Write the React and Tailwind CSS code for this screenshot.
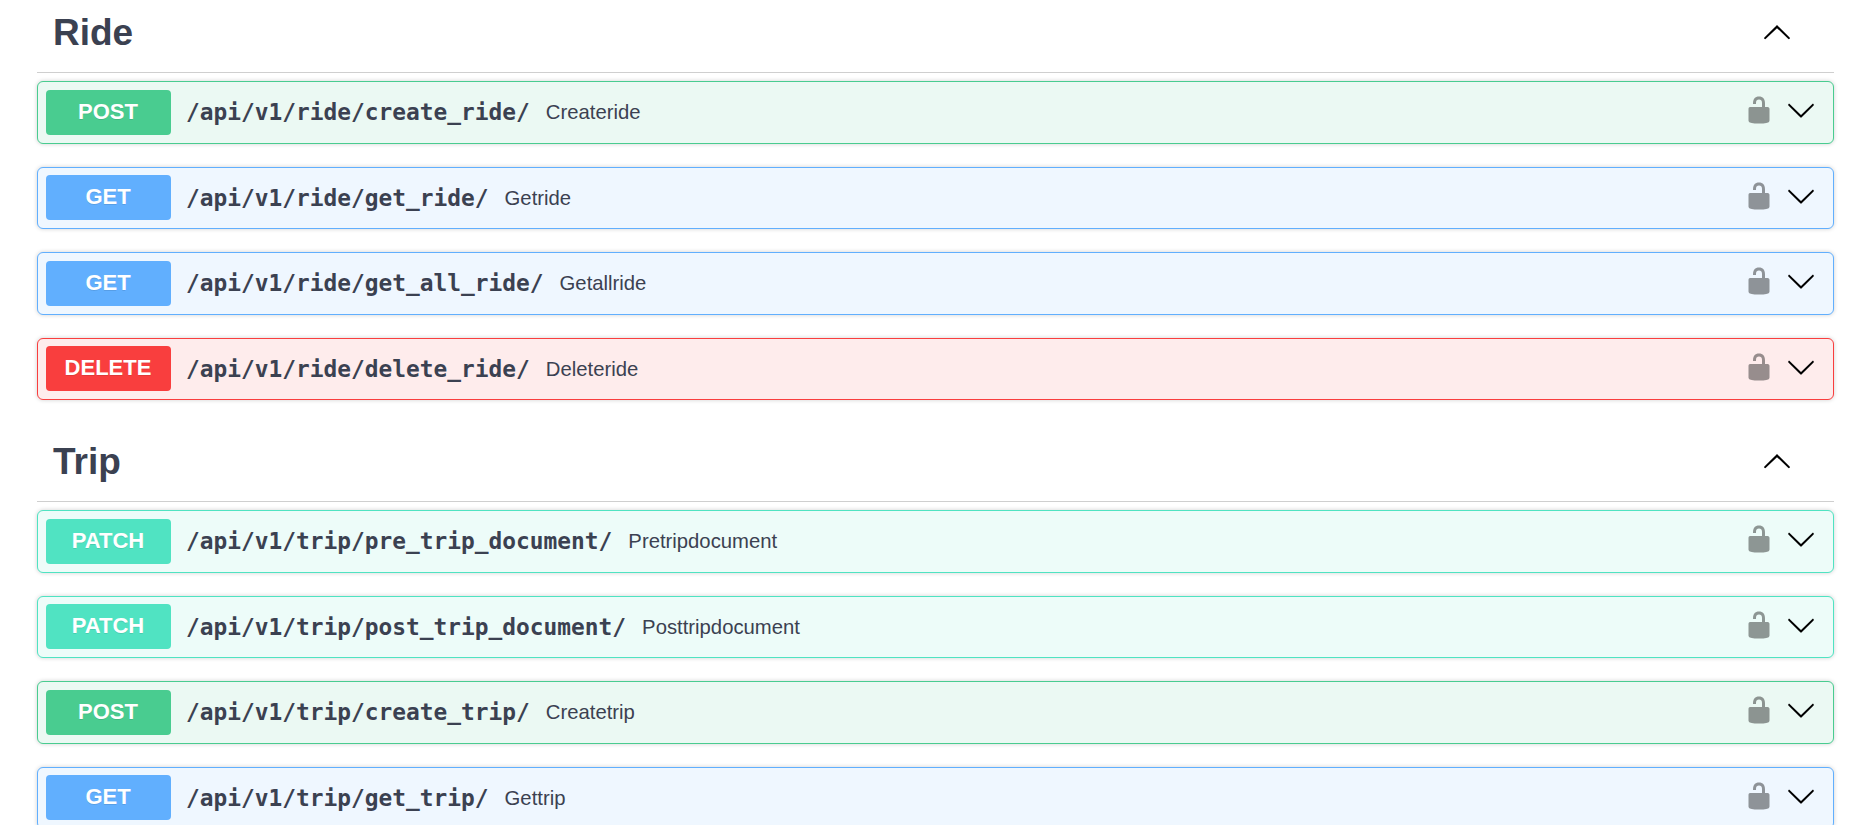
const unlockPath =
  "M15.8 8H14V5.6C14 2.703 12.665 1 10 1 7.334 1 6 2.703 6 5.6V6h2v-.801C8 3.754 8.797 3 10 3c1.203 0 2 .754 2 2.199V8H4c-.553 0-1 .646-1 1.199V17c0 .549.428 1.139.951 1.307l1.197.387C5.672 18.861 6.55 19 7.1 19h5.8c.549 0 1.428-.139 1.951-.307l1.196-.387c.524-.167.953-.757.953-1.306V9.199C17 8.646 16.352 8 15.8 8z"
const arrowPath =
  "M17.418 6.109c.272-.268.709-.268.979 0s.271.701 0 .969l-7.908 7.83c-.27.268-.707.268-.979 0l-7.908-7.83c-.27-.268-.27-.701 0-.969.271-.268.709-.268.979 0L10 13.25l7.418-7.141z"

const METHOD_STYLES = {
  POST: { row: "border-[#49cc90] bg-[#ebf9f3]", badge: "bg-[#49cc90]" },
  GET: { row: "border-[#61affe] bg-[#eff7ff]", badge: "bg-[#61affe]" },
  DELETE: { row: "border-[#f93e3e] bg-[#feecec]", badge: "bg-[#f93e3e]" },
  PATCH: { row: "border-[#50e3c2] bg-[#edfcf9]", badge: "bg-[#50e3c2]" },
}

const sections = [
  {
    title: "Ride",
    rows: [
      { method: "POST", path: "/api/v1/ride/create_ride/", summary: "Createride" },
      { method: "GET", path: "/api/v1/ride/get_ride/", summary: "Getride" },
      { method: "GET", path: "/api/v1/ride/get_all_ride/", summary: "Getallride" },
      { method: "DELETE", path: "/api/v1/ride/delete_ride/", summary: "Deleteride" },
    ],
  },
  {
    title: "Trip",
    rows: [
      { method: "PATCH", path: "/api/v1/trip/pre_trip_document/", summary: "Pretripdocument" },
      { method: "PATCH", path: "/api/v1/trip/post_trip_document/", summary: "Posttripdocument" },
      { method: "POST", path: "/api/v1/trip/create_trip/", summary: "Createtrip" },
      { method: "GET", path: "/api/v1/trip/get_trip/", summary: "Gettrip" },
    ],
  },
]

const Arrow = ({ up }) => (
  <svg viewBox="0 0 20 20" className={`w-[30px] h-[30px] fill-black ${up ? "rotate-180" : ""}`}>
    <path d={arrowPath} />
  </svg>
)

const OperationRow = ({ method, path, summary }) => {
  const styles = METHOD_STYLES[method]
  return (
    <div className={`flex items-center h-[62.5px] mb-[23px] pl-[7.5px] pr-[17px] border rounded-[6px] shadow-[0_0_4px_rgba(0,0,0,0.19)] ${styles.row}`}>
      <div className={`w-[125px] h-[45px] pb-[2px] flex items-center justify-center rounded-[4px] text-white font-bold text-[22px] [text-shadow:0_1px_0_rgba(0,0,0,0.1)] ${styles.badge}`}>
        {method}
      </div>
      <span className="ml-[15.5px] text-[#3b4151] font-bold text-[22.85px] font-['DejaVu_Sans_Mono',monospace]">{path}</span>
      <span className="ml-[16px] text-[#3b4151] text-[20.3px]">{summary}</span>
      <div className="ml-auto mb-[4px] flex items-center gap-[12px]">
        <svg viewBox="0 0 20 20" className="w-[30px] h-[30px] fill-black opacity-40">
          <path d={unlockPath} />
        </svg>
        <Arrow />
      </div>
    </div>
  )
}

const App = () => {
  return (
    <div className="h-[825px] overflow-hidden bg-white pl-[37px] pr-[29px] text-[#3b4151] font-['Liberation_Sans',Arial,sans-serif]">
      <div className="-mt-[6px]">
        {sections.map((section) => (
          <div key={section.title}>
            <div className="flex items-center justify-between h-[79px] mb-[8px] pl-[16px] pr-[42px] border-b border-[#cfcfcf]">
              <h3 className="text-[37px] font-bold">{section.title}</h3>
              <Arrow up />
            </div>
            {section.rows.map((row) => (
              <OperationRow key={row.path} {...row} />
            ))}
          </div>
        ))}
      </div>
    </div>
  )
}

export default App
